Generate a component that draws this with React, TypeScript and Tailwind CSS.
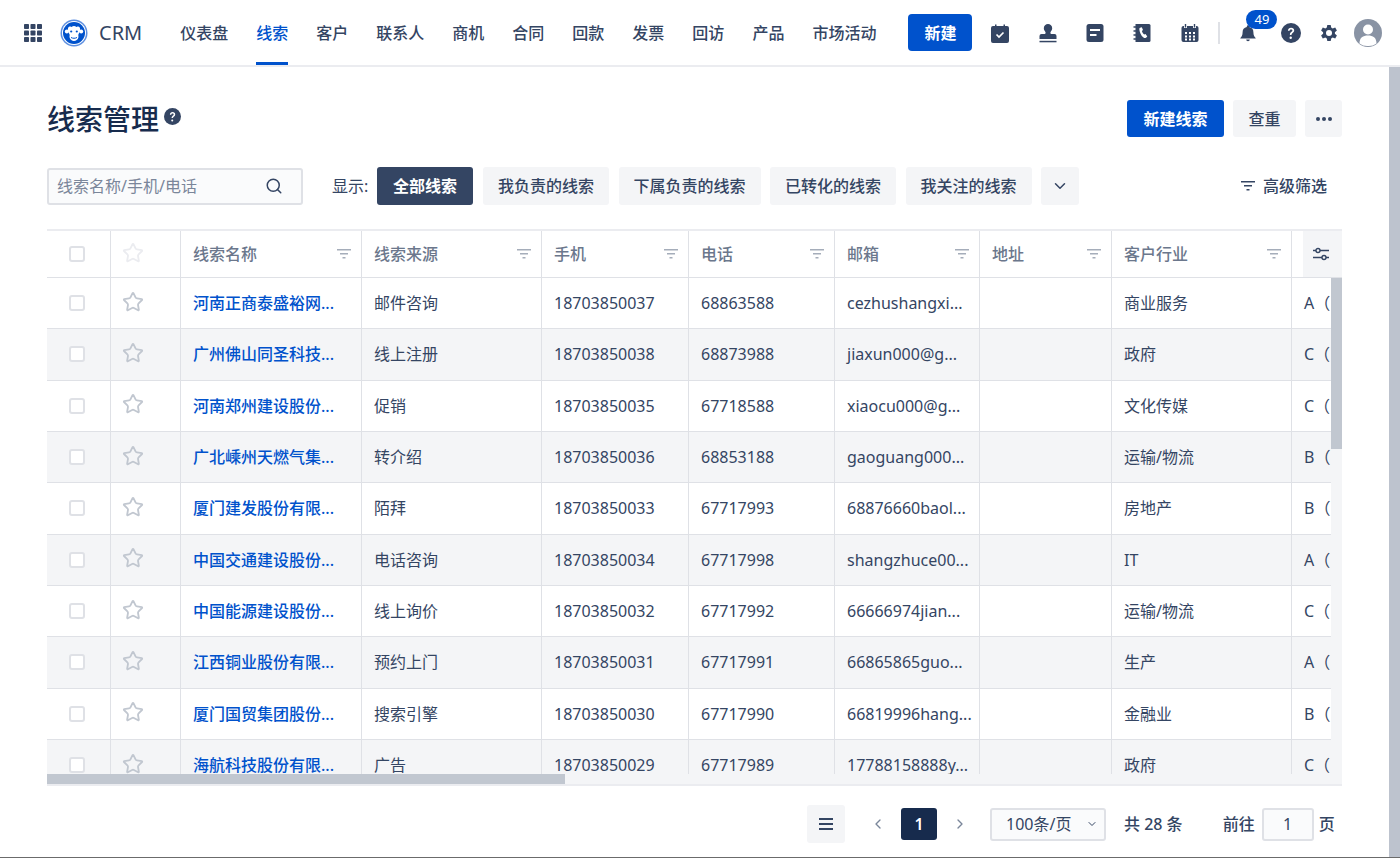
import React from "react";
import { ChevronDown, ChevronLeft, ChevronRight, Search, Star } from "lucide-react";

const nav = ["仪表盘", "线索", "客户", "联系人", "商机", "合同", "回款", "发票", "回访", "产品", "市场活动"];
const views = ["我负责的线索", "下属负责的线索", "已转化的线索", "我关注的线索"];

const columns = [
  { name: "线索名称", w: "w-[181px]" },
  { name: "线索来源", w: "w-[180px]" },
  { name: "手机", w: "w-[147px]" },
  { name: "电话", w: "w-[146px]" },
  { name: "邮箱", w: "w-[145px]" },
  { name: "地址", w: "w-[132px]" },
  { name: "客户行业", w: "w-[180px]" },
];

const rows = [
  ["河南正商泰盛裕网...", "邮件咨询", "18703850037", "68863588", "cezhushangxi...", "", "商业服务", "A（"],
  ["广州佛山同圣科技...", "线上注册", "18703850038", "68873988", "jiaxun000@g...", "", "政府", "C（"],
  ["河南郑州建设股份...", "促销", "18703850035", "67718588", "xiaocu000@g...", "", "文化传媒", "C（"],
  ["广北嵊州天燃气集...", "转介绍", "18703850036", "68853188", "gaoguang000...", "", "运输/物流", "B（"],
  ["厦门建发股份有限...", "陌拜", "18703850033", "67717993", "68876660baol...", "", "房地产", "B（"],
  ["中国交通建设股份...", "电话咨询", "18703850034", "67717998", "shangzhuce00...", "", "IT", "A（"],
  ["中国能源建设股份...", "线上询价", "18703850032", "67717992", "66666974jian...", "", "运输/物流", "C（"],
  ["江西铜业股份有限...", "预约上门", "18703850031", "67717991", "66865865guo...", "", "生产", "A（"],
  ["厦门国贸集团股份...", "搜索引擎", "18703850030", "67717990", "66819996hang...", "", "金融业", "B（"],
  ["海航科技股份有限...", "广告", "18703850029", "67717989", "17788158888y...", "", "政府", "C（"],
];

function FilterIcon({ className }: { className: string }) {
  return (
    <svg viewBox="0 0 14 10" className={className} fill="currentColor">
      <rect x="0" y="0" width="14" height="1.5" />
      <rect x="3" y="4" width="8" height="1.5" />
      <rect x="5.5" y="8" width="3" height="1.5" />
    </svg>
  );
}

function Logo() {
  return (
    <svg viewBox="0 0 28 28" className="w-7 h-7 ml-[18px]">
      <circle cx="14" cy="14" r="13.5" fill="#5d8fe0" />
      <circle cx="14" cy="14" r="12" fill="#fff" />
      <circle cx="14" cy="14" r="11" fill="#0052cc" />
      <circle cx="6.8" cy="12.6" r="2" fill="#fff" />
      <circle cx="21.2" cy="12.6" r="2" fill="#fff" />
      <path d="M14 7c-1 0-1.8.4-2.3 1-.6-.5-1.2-.7-2-.5C8 8 7.600 9.800 8 12c.3 1.700 1.300 2.500 1.600 3.500.3 1 -.3 1.500 0 3 .5 2.200 2.500 3.500 4.400 3.500s3.900-1.300 4.400-3.500c.3-1.500-.3-2 0-3 .3-1 1.300-1.800 1.600-3.500.4-2.200 0-4-1.700-4.500-.8-.2-1.400 0-2 .5C15.800 7.400 15 7 14 7z" fill="#fff" />
      <circle cx="11.200" cy="12.500" r="1.100" fill="#0052cc" />
      <circle cx="16.800" cy="12.500" r="1.100" fill="#0052cc" />
      <path d="M11 18.500c1.800 1 4.200 1 6 0" stroke="#0052cc" strokeWidth="1" fill="none" />
    </svg>
  );
}

function GridIcon() {
  return (
    <svg viewBox="0 0 18 18" className="w-[18px] h-[18px]" fill="#344563">
      {[0, 6.5, 13].map((y) =>
        [0, 6.5, 13].map((x) => <rect key={`${x}-${y}`} x={x} y={y} width="5" height="5" rx="0.8" />)
      )}
    </svg>
  );
}

function TaskIcon() {
  return (
    <svg viewBox="0 0 20 20" className="w-5 h-5">
      <path d="M3 3h2V1.500h1.500V3h7V1.500H15V3h2a2 2 0 0 1 2 2v13a2 2 0 0 1-2 2H3a2 2 0 0 1-2-2V5a2 2 0 0 1 2-2z" fill="#344563" />
      <path d="M6.500 11.500l2.500 2.500 4.500-4.500" stroke="#fff" strokeWidth="1.700" fill="none" />
    </svg>
  );
}

function StampIcon() {
  return (
    <svg viewBox="0 0 20 20" className="w-5 h-5" fill="#344563">
      <path d="M10 1a4.200 4.200 0 0 0-4.200 4.200c0 1.800 1.200 2.800 1.700 4 .3.800 0 1.300-.7 1.800H3.500A2 2 0 0 0 1.500 13v3h17v-3a2 2 0 0 0-2-2h-3.300c-.7-.5-1-1-.7-1.800.5-1.200 1.700-2.200 1.700-4A4.200 4.200 0 0 0 10 1z" />
      <rect x="1.500" y="17.800" width="17" height="1.500" />
    </svg>
  );
}

function NoteIcon() {
  return (
    <svg viewBox="0 0 18 20" className="w-[18px] h-5">
      <rect x="0.500" y="1" width="17" height="18" rx="2.500" fill="#344563" />
      <rect x="4" y="6" width="10" height="2" fill="#fff" />
      <rect x="4" y="11" width="6.500" height="2" fill="#fff" />
    </svg>
  );
}

function PhoneBookIcon() {
  return (
    <svg viewBox="0 0 20 20" className="w-5 h-5">
      <path d="M3.500 1H17a1.500 1.500 0 0 1 1.500 1.500v15A1.500 1.500 0 0 1 17 19H3.500z" fill="#344563" />
      <path d="M1.500 4h3M1.500 8h3M1.500 12h3M1.500 16h3" stroke="#344563" strokeWidth="1.300" />
      <path d="M8 4.800l1.800-.6 1.200 2.900-1.100.9c.4 1.400 1.200 2.700 2.300 3.600l1.300-.5 1.800 2.400-1.300 1.300c-.8.500-1.800.4-2.500-.2C9 12.500 7.600 9.300 7.300 6.200c0-.6.200-1.100.7-1.400z" fill="#fff" />
    </svg>
  );
}

function CalendarIcon() {
  return (
    <svg viewBox="0 0 20 20" className="w-5 h-5">
      <rect x="1.500" y="3" width="17" height="16" rx="2" fill="#344563" />
      <path d="M5.500 1v4M14.500 1v4" stroke="#fff" strokeWidth="3" />
      <path d="M5.500 1v3.500M14.500 1v3.500" stroke="#344563" strokeWidth="1.400" />
      {[9, 12.500, 15.500].map((y) =>
        [5, 9, 13].map((x) => <rect key={`${x}-${y}`} x={x} y={y} width="2" height="2" fill="#fff" />)
      )}
    </svg>
  );
}

function BellIcon() {
  return (
    <svg viewBox="0 0 20 20" className="w-[18px] h-5" fill="#344563">
      <path d="M10 1.500a1.300 1.300 0 0 0-1.300 1.300v.5A6 6 0 0 0 4 9.200c0 3.500-1 5-2.500 6.300v.5h17v-.5C17 14.200 16 12.700 16 9.200a6 6 0 0 0-4.700-5.900v-.5A1.300 1.300 0 0 0 10 1.500z" />
      <path d="M8 17.200h4a2 2 0 0 1-4 0z" />
    </svg>
  );
}

function HelpIcon({ className }: { className: string }) {
  return (
    <svg viewBox="0 0 20 20" className={className}>
      <circle cx="10" cy="10" r="10" fill="#344563" />
      <path d="M6.900 7.800c.1-1.900 1.400-3 3.200-3 1.800 0 3.100 1.100 3.100 2.700 0 2.300-2.600 2.300-2.700 4.400H8.900c0-2.900 2.500-3 2.500-4.300 0-.7-.5-1.200-1.300-1.200-.9 0-1.400.5-1.500 1.400z" fill="#fff" />
      <circle cx="9.700" cy="14.700" r="1.200" fill="#fff" />
    </svg>
  );
}

function GearIcon() {
  return (
    <svg viewBox="0 0 20 20" className="w-5 h-5">
      <path d="M8.300 1h3.400l.5 2.600 1.500.8 2.500-.9 1.700 3-2 1.700v1.600l2 1.700-1.700 3-2.500-.9-1.500.8-.5 2.600H8.300l-.5-2.600-1.500-.8-2.500.9-1.700-3 2-1.700V8.200l-2-1.700 1.700-3 2.500.9 1.500-.8z" fill="#344563" transform="translate(0 1)" />
      <circle cx="10" cy="10" r="3" fill="#fff" />
    </svg>
  );
}

function Avatar() {
  return (
    <svg viewBox="0 0 28 28" className="w-7 h-7">
      <circle cx="14" cy="14" r="14" fill="#8993a4" />
      <circle cx="14" cy="10.500" r="5" fill="#fff" />
      <path d="M5.500 24.500c0-6 3.500-8 8.500-8s8.500 2 8.500 8A13 13 0 0 1 14 27a13 13 0 0 1-8.500-2.500z" fill="#fff" />
    </svg>
  );
}

function SlidersIcon() {
  return (
    <svg viewBox="0 0 16 14" className="w-4 h-3.5" fill="none" stroke="#344563" strokeWidth="1.400">
      <path d="M0 3.500h3M7 3.500h9M0 10.500h9M13 10.500h3" />
      <circle cx="5" cy="3.500" r="2" />
      <circle cx="11" cy="10.500" r="2" />
    </svg>
  );
}

function Checkbox({ className }: { className: string }) {
  return <span className={`block w-4 h-4 border-2 border-[#dfe1e6] rounded-[3px] bg-white ${className}`} />;
}

export default function App() {
  return (
    <div className="relative w-[1400px] h-[858px] overflow-hidden bg-white text-[16px] text-[#344563] font-['Noto_Sans','Noto_Sans_CJK_SC',sans-serif]">
      {/* top bar */}
      <header className="h-[67px] flex items-center pl-6 border-b-2 border-[#ebecf0]">
        <GridIcon />
        <Logo />
        <span className="ml-[11px] text-[20px] leading-none">CRM</span>
        <nav className="ml-[38px] flex h-[65px] gap-[28px]">
          {nav.map((item, i) => (
            <a
              key={item}
              className={`flex items-center font-medium border-b-[3px] pt-[3px] ${i === 1 ? "text-[#0052cc] border-[#0052cc]" : "border-transparent"}`}
            >
              {item}
            </a>
          ))}
        </nav>
        <button className="ml-[32px] w-16 h-[37px] rounded-[4px] bg-[#0052cc] text-white font-semibold">新建</button>
        <div className="ml-[18px] flex items-center gap-[28px]">
          <TaskIcon />
          <StampIcon />
          <NoteIcon />
          <PhoneBookIcon />
          <CalendarIcon />
        </div>
        <span className="ml-[18px] w-[2px] h-[22px] bg-[#dfe1e6]" />
        <div className="relative ml-[19px]">
          <BellIcon />
          <span className="absolute left-[7px] top-[-13px] w-[31px] h-[19px] rounded-full bg-[#0052cc] text-white text-[13px] leading-[19px] text-center">49</span>
        </div>
        <HelpIcon className="ml-[24px] w-5 h-5" />
        <div className="ml-[18px]"><GearIcon /></div>
        <div className="ml-[15px]"><Avatar /></div>
      </header>

      <main className="pl-[47px] pr-[58px]">
        <div className="h-[100px] flex items-center pt-[3px]">
          <h1 className="text-[28px] leading-none font-medium text-[#172b4d]">线索管理</h1>
          <HelpIcon className="ml-[5px] w-[17px] h-[17px] mb-[4px]" />
          <button className="ml-auto w-[97px] h-[37px] rounded-[3px] bg-[#0052cc] text-white font-semibold">新建线索</button>
          <button className="ml-[9px] w-[63px] h-[37px] rounded-[3px] bg-[#f4f5f7] font-medium">查重</button>
          <button className="ml-[9px] w-[37px] h-[37px] rounded-[3px] bg-[#f4f5f7] flex items-center justify-center gap-[2px]">
            <i className="w-1 h-1 rounded-full bg-[#344563]" />
            <i className="w-1 h-1 rounded-full bg-[#344563]" />
            <i className="w-1 h-1 rounded-full bg-[#344563]" />
          </button>
        </div>

        {/* filters */}
        <div className="h-[38px] flex items-center">
          <div className="w-[256px] h-[37px] rounded-[3px] border-2 border-[#dfe1e6] bg-[#fafbfc] flex items-center pl-[8px] pr-[18px]">
            <span className="text-[#7a869a]">线索名称/手机/电话</span>
            <Search className="ml-auto w-[18px] h-[18px]" strokeWidth={2} />
          </div>
          <span className="ml-[29px] w-[45px]">显示:</span>
          <button className="w-[96px] h-[38px] rounded-[3px] bg-[#344563] text-white font-semibold">全部线索</button>
          <div className="ml-[10px] flex gap-[9.500px]">
            {views.map((v) => (
              <button key={v} className="h-[38px] px-[15px] rounded-[3px] bg-[#f4f5f7] font-medium">{v}</button>
            ))}
          </div>
          <button className="ml-[9px] w-[38px] h-[38px] rounded-[3px] bg-[#f4f5f7] flex items-center justify-center">
            <ChevronDown className="w-[18px] h-[18px]" />
          </button>
          <div className="ml-auto mr-[15px] flex items-center gap-[8px] font-medium">
            <FilterIcon className="w-[14px] h-[10px]" />
            高级筛选
          </div>
        </div>

        {/* table */}
        <div className="mt-[24px] w-[1295px] border-t-2 border-[#ebecf0] border-b-2">
          <div className="flex h-[47px] border-b border-[#dfe1e6] text-[#6b778c] font-medium">
            <div className="w-[64px] shrink-0 border-r border-[#dfe1e6] flex items-center justify-center"><Checkbox className="ml-[-3px]" /></div>
            <div className="w-[70px] shrink-0 border-r border-[#dfe1e6] flex items-center pl-[11px]">
              <Star className="w-[22px] h-[22px] text-[#ebecf0] mb-[2px]" strokeWidth={2} />
            </div>
            {columns.map((c) => (
              <div key={c.name} className={`${c.w} shrink-0 border-r border-[#dfe1e6] flex items-center pl-[12px] pr-[10px] justify-between`}>
                {c.name}
                <FilterIcon className="w-[14px] h-[10px] text-[#a5adba]" />
              </div>
            ))}
            <div className="w-[11px] shrink-0" />
            <div className="w-[39px] shrink-0 bg-[#f4f5f7] flex items-center justify-center pr-[4px]"><SlidersIcon /></div>
          </div>
          <div className="flex h-[496px]">
            <div className="w-[1284px] overflow-hidden">
              {rows.map((row, i) => (
                <div key={row[2]} className={`flex h-[51.330px] border-b border-[#dfe1e6] ${i % 2 === 1 ? "bg-[#f4f5f7]" : "bg-white"}`}>
                  <div className="w-[64px] shrink-0 border-r border-[#dfe1e6] flex items-center justify-center"><Checkbox className="ml-[-3px]" /></div>
                  <div className="w-[70px] shrink-0 border-r border-[#dfe1e6] flex items-center pl-[11px]">
                    <Star className="w-[22px] h-[22px] text-[#c1c7d0] mb-[3px]" strokeWidth={2} />
                  </div>
                  {columns.map((c, j) => (
                    <div
                      key={c.name}
                      className={`${c.w} shrink-0 border-r border-[#dfe1e6] flex items-center pl-[12px] whitespace-nowrap ${j === 0 ? "text-[#0052cc] font-medium" : ""}`}
                    >
                      {row[j]}
                    </div>
                  ))}
                  <div className="flex-1 flex items-center pl-[12px] whitespace-nowrap">{row[7]}</div>
                </div>
              ))}
            </div>
            <div className="w-[11px] bg-[#f4f5f7]">
              <div className="h-[171px] bg-[#c1c7d0]" />
            </div>
          </div>
          <div className="h-[10px] bg-[#f4f5f7]">
            <div className="w-[518px] h-full bg-[#c1c7d0]" />
          </div>
        </div>

        {/* pagination */}
        <div className="mt-[19px] flex items-center h-[38px]">
          <button className="ml-[760px] w-[38px] h-[38px] rounded-[3px] bg-[#f4f5f7] flex items-center justify-center">
            <svg viewBox="0 0 14 12" className="w-[14px] h-3" fill="#344563">
              <rect width="14" height="2" />
              <rect y="5" width="14" height="2" />
              <rect y="10" width="14" height="2" />
            </svg>
          </button>
          <ChevronLeft className="ml-[25px] w-4 h-4 text-[#7a869a]" />
          <span className="ml-[15px] w-9 h-8 rounded-[3px] bg-[#172b4d] text-white font-semibold flex items-center justify-center">1</span>
          <ChevronRight className="ml-[15px] w-4 h-4 text-[#7a869a]" />
          <div className="ml-[22px] w-[116px] h-[33px] rounded-[3px] border-2 border-[#dfe1e6] bg-[#fafbfc] flex items-center pl-[14px] pr-[6px] justify-between">
            100条/页
            <ChevronDown className="w-3 h-3" />
          </div>
          <span className="ml-[18px] font-medium">共 28 条</span>
          <span className="ml-[40px] font-medium">前往</span>
          <div className="ml-[7px] w-[52px] h-[33px] rounded-[3px] border-2 border-[#dfe1e6] bg-[#fafbfc] flex items-center justify-center">1</div>
          <span className="ml-[5px] font-medium">页</span>
        </div>
      </main>

      {/* window scrollbar and bottom edge */}
      <div className="absolute right-0 top-[67px] bottom-0 w-[11px] bg-[#bdc3ce]" />
      <div className="absolute left-0 right-0 bottom-0 h-px bg-[#6b6b6b]" />
    </div>
  );
}
